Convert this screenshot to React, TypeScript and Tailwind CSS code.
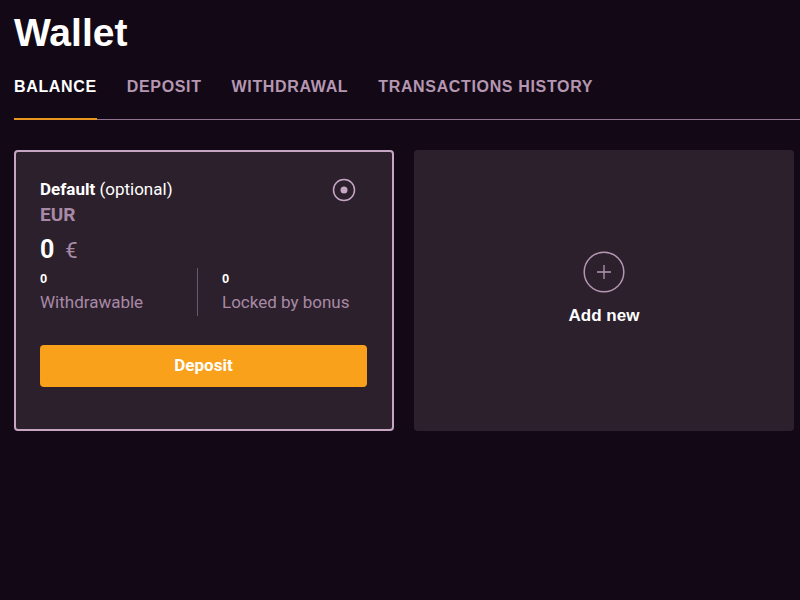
import React from "react";

export default function App() {
  const tabs = ["BALANCE", "DEPOSIT", "WITHDRAWAL", "TRANSACTIONS HISTORY"];
  const roboto = { fontFamily: "Roboto, sans-serif" };
  return (
    <div
      className="w-[800px] h-[600px] bg-[#130916] text-white overflow-hidden"
      style={{ fontFamily: '"Liberation Sans", Arial, sans-serif' }}
    >
      <div className="pl-[14px] pt-[10px]">
        <h1 className="text-[39px] leading-[46px] font-bold">Wallet</h1>
      </div>
      <div className="pl-[14px] mt-[22px]">
        <div className="flex gap-[30px] border-b border-[#8f7590]">
          {tabs.map((t, i) => (
            <div
              key={t}
              className={
                "pb-[22px] text-[16px] leading-[18px] font-bold tracking-[0.65px] -mb-px " +
                (i === 0
                  ? "text-white border-b-2 border-[#e9961f]"
                  : "text-[#b597b2] border-b-2 border-transparent")
              }
            >
              {t}
            </div>
          ))}
        </div>
      </div>
      <div className="flex gap-[20px] pl-[14px] mt-[30px]">
        <div className="w-[380px] h-[281px] rounded-[4px] border-2 border-[#c6a6c3] bg-[#2c202c] px-[24px] pt-[27px]">
          <div className="flex items-start justify-between">
            <div className="text-[17px] leading-[21px]" style={roboto}>
              <span className="font-bold">Default</span> <span>(optional)</span>
            </div>
            <svg width="24" height="24" viewBox="0 0 24 24" className="mr-[12px] -mt-[1px]">
              <circle cx="12" cy="12" r="10.5" fill="none" stroke="#c6a6c3" strokeWidth="1.5" />
              <circle cx="12" cy="12" r="3.5" fill="#c6a6c3" />
            </svg>
          </div>
          <div className="text-[19px] leading-[22px] font-bold text-[#a88aa6] mt-[2px]" style={roboto}>
            EUR
          </div>
          <div className="flex items-baseline mt-[10px]" style={roboto}>
            <span className="text-[25px] leading-[28px] font-bold">0</span>
            <span className="text-[22px] leading-[28px] text-[#a88aa6] ml-[11px]">€</span>
          </div>
          <div className="flex mt-[3px]">
            <div className="w-[158px] border-r border-[#6e566c] pt-[3px] pb-[4px]">
              <div className="text-[13px] leading-[16px] font-bold">0</div>
              <div className="text-[17px] leading-[20px] text-[#a88aa6] mt-[5px]" style={roboto}>
                Withdrawable
              </div>
            </div>
            <div className="pl-[24px] pt-[3px]">
              <div className="text-[13px] leading-[16px] font-bold">0</div>
              <div className="text-[17px] leading-[20px] text-[#a88aa6] mt-[5px]" style={roboto}>
                Locked by bonus
              </div>
            </div>
          </div>
          <button
            className="mt-[29px] w-[327px] h-[42px] rounded-[4px] bg-[#f9a11b] text-white text-[17px] font-bold"
            style={roboto}
          >
            Deposit
          </button>
        </div>
        <div className="w-[380px] h-[281px] rounded-[4px] bg-[#2c202c] flex flex-col items-center justify-center">
          <svg width="42" height="42" viewBox="0 0 42 42" className="-mt-[4px]">
            <circle cx="21" cy="21" r="19.8" fill="none" stroke="#b596b1" strokeWidth="1.5" />
            <path d="M21 14v14M14 21h14" stroke="#b596b1" strokeWidth="1.3" />
          </svg>
          <div className="text-[17px] leading-[20px] font-bold mt-[13px]">Add new</div>
        </div>
      </div>
    </div>
  );
}
